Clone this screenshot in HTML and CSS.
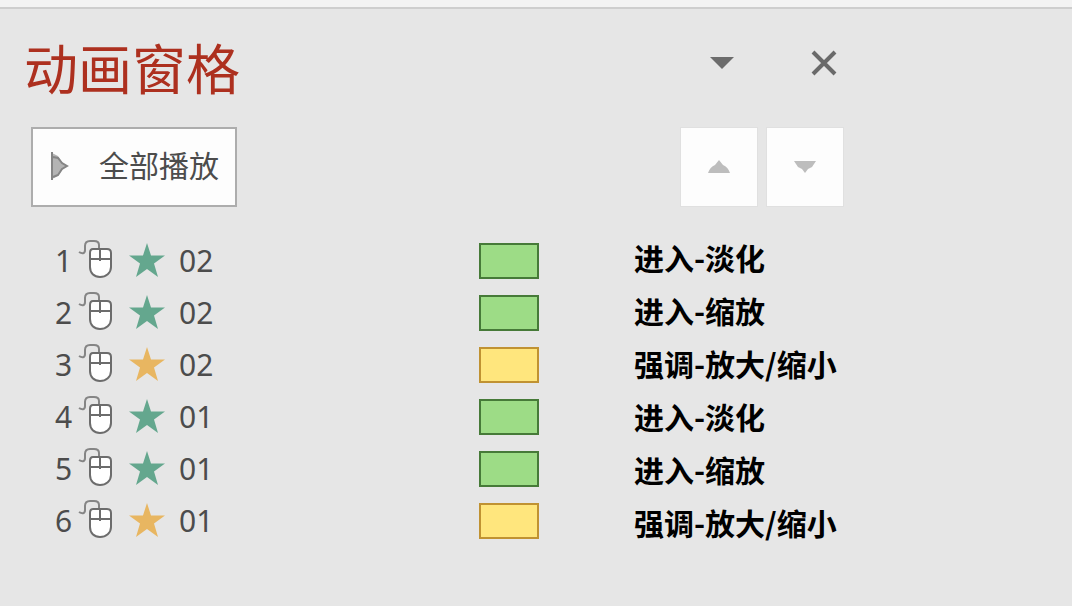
FILE: index.html
```
<!DOCTYPE html>
<html lang="zh-CN">
<head>
<meta charset="utf-8">
<title>动画窗格</title>
<link rel="stylesheet" href="styles.css">
</head>
<body>
<svg class="defs" aria-hidden="true">
  <symbol id="mouse" viewBox="0 0 34 40">
    <path d="M1 13C4 15 7 15 7 11V7C7 3 9 2 12 2H16C19 2 21 3 21 6V9" fill="none" stroke="#858585" stroke-width="2"/>
    <path d="M15 10H29Q33 10 33 14V28C33 34 28 38 22 38S12 34 12 28V14Q12 10 15 10Z" fill="#fff" stroke="#6c6c6c" stroke-width="2"/>
    <path d="M12 20H33M22 10V22" fill="none" stroke="#6c6c6c" stroke-width="2"/>
  </symbol>
  <symbol id="star" viewBox="0 0 36 34">
    <path d="M18 0L22 12.500H36L25 20.500L29 34L18 26L7 34L11 20.500L0 12.500H14Z" fill="currentColor"/>
  </symbol>
</svg>
<div class="ribbon"></div>
<main class="pane">
  <header class="head">
    <h1 class="title">动画窗格</h1>
    <button class="icon-button" aria-label="窗格选项"><svg width="24" height="14" viewBox="0 0 24 14"><path d="M0 1H24L12 13Z" fill="#6c6c6c"/></svg></button>
    <button class="icon-button" aria-label="关闭"><svg width="26" height="26" viewBox="0 0 26 26"><path d="M2 2L24 24M24 2L2 24" stroke="#6a6a6a" stroke-width="4"/></svg></button>
  </header>
  <div class="toolbar">
    <button class="play"><svg width="18" height="28" viewBox="0 0 18 28"><path d="M1 1V27L7 24L11 18L16 14L11 10L7 4Z" fill="#b4b4b4"/><path d="M1 0V28M2 5L7 6L11 11L16 14L11 17L7 23L2 25" fill="none" stroke="#858585" stroke-width="2"/></svg><span class="play-text">全部播放</span></button>
    <div class="moves">
      <button class="move" aria-label="上移"><svg width="22" height="14" viewBox="0 0 22 14"><path d="M0 13Q2 7 7 5L11 0L15 5Q20 7 22 13Z" fill="#bdbdbd"/></svg></button>
      <button class="move" aria-label="下移"><svg width="22" height="14" viewBox="0 0 22 14"><path d="M0 1H22L18 7L14 9L11 13L8 9L4 7Z" fill="#bdbdbd"/></svg></button>
    </div>
  </div>
  <div class="timeline">
    <ol class="effects">
      <li class="effect enter"><span class="order">1</span><svg class="mouse"><use href="#mouse"/></svg><svg class="star"><use href="#star"/></svg><span class="name">02</span><span class="bar"></span></li>
      <li class="effect enter"><span class="order">2</span><svg class="mouse"><use href="#mouse"/></svg><svg class="star"><use href="#star"/></svg><span class="name">02</span><span class="bar"></span></li>
      <li class="effect emphasis"><span class="order">3</span><svg class="mouse"><use href="#mouse"/></svg><svg class="star"><use href="#star"/></svg><span class="name">02</span><span class="bar"></span></li>
      <li class="effect enter"><span class="order">4</span><svg class="mouse"><use href="#mouse"/></svg><svg class="star"><use href="#star"/></svg><span class="name">01</span><span class="bar"></span></li>
      <li class="effect enter"><span class="order">5</span><svg class="mouse"><use href="#mouse"/></svg><svg class="star"><use href="#star"/></svg><span class="name">01</span><span class="bar"></span></li>
      <li class="effect emphasis"><span class="order">6</span><svg class="mouse"><use href="#mouse"/></svg><svg class="star"><use href="#star"/></svg><span class="name">01</span><span class="bar"></span></li>
    </ol>
    <ul class="labels">
      <li>进入-淡化</li>
      <li>进入-缩放</li>
      <li>强调-放大/缩小</li>
      <li>进入-淡化</li>
      <li>进入-缩放</li>
      <li>强调-放大/缩小</li>
    </ul>
  </div>
</main>
</body>
</html>
```
FILE: styles.css
```
* { box-sizing: border-box; }
body {
  margin: 0;
  background: #e6e6e6;
  color: #4c4c4c;
  font-family: "Noto Sans", "Noto Sans CJK SC", sans-serif;
}
svg { display: block; flex: none; }
button { font: inherit; color: inherit; cursor: pointer; }
.defs { position: absolute; width: 0; height: 0; }
.ribbon {
  height: 9px;
  background: #f3f3f3;
  border-bottom: 2px solid #cecece;
}
.pane { max-width: 880px; padding: 18px 36px 0 24px; }
.head {
  display: flex;
  align-items: center;
  height: 84px;
}
.title {
  flex: 1;
  margin: 0;
  padding-bottom: 4px;
  color: #ad301f;
  font: 400 54px/80px "Noto Sans CJK SC", sans-serif;
}
.icon-button {
  display: flex;
  align-items: center;
  justify-content: center;
  width: 36px;
  height: 36px;
  margin: 0 0 12px 66px;
  padding: 0;
  border: 0;
  background: none;
}
.icon-button:last-child { margin-right: 2px; }
.toolbar {
  display: flex;
  justify-content: space-between;
  margin: 16px 0 0 7px;
}
.play {
  display: flex;
  align-items: center;
  gap: 30px;
  height: 80px;
  padding: 0 16px 2px 18px;
  border: 2px solid #adadad;
  background: #fdfdfd;
  font: 400 30px/40px "Noto Sans CJK SC", sans-serif;
}
.play-text { padding-bottom: 4px; }
.moves { display: flex; gap: 8px; }
.move {
  display: flex;
  align-items: center;
  justify-content: center;
  width: 78px;
  height: 80px;
  padding: 0;
  border: 1px solid #e0e0e0;
  background: #fdfdfd;
}
.timeline { display: flex; gap: 95px; margin-top: 24px; }
.effects, .labels { margin: 0; padding: 0; list-style: none; }
.effects { flex: 1; padding: 4px 0 0 31px; }
.effect {
  display: flex;
  align-items: center;
  height: 52px;
  font-size: 30px;
  line-height: 52px;
}
.order { width: 23px; }
.mouse { width: 34px; height: 40px; margin-bottom: 4px; }
.star { width: 36px; height: 34px; margin: 0 14px 2px 17px; }
.enter { --star: #64a78e; --fill: #9ddc86; --line: #467a38; }
.emphasis { --star: #e8b661; --fill: #ffe67d; --line: #c09232; }
.star { color: var(--star); }
.bar {
  width: 60px;
  height: 36px;
  margin-left: auto;
  border: 2px solid var(--line);
  background: var(--fill);
}
.labels {
  flex: none;
  width: 210px;
  color: #000;
  font: 700 30px/53px "Noto Sans CJK SC", sans-serif;
}
```
